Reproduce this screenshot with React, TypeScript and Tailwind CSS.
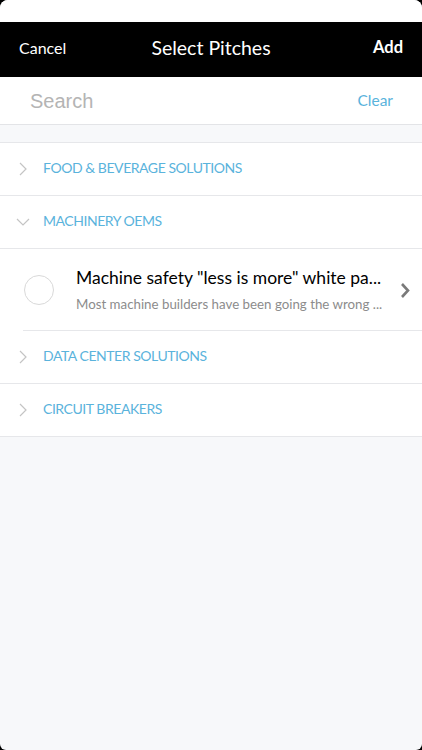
import React from "react";

const font = { fontFamily: 'Lato, "Noto Sans", sans-serif' };

function Chevron({ open }: { open?: boolean }) {
  return (
    <svg width="14" height="14" viewBox="0 0 14 14" className="shrink-0">
      {open ? (
        <path d="M1 4 L7 10 L13 4" fill="none" stroke="#c4c4c4" strokeWidth="1.2" />
      ) : (
        <path d="M4 1 L10 7 L4 13" fill="none" stroke="#c4c4c4" strokeWidth="1.2" />
      )}
    </svg>
  );
}

function Category({ label, open }: { label: string; open?: boolean }) {
  return (
    <div className="flex h-[53px] items-center border-b border-[#e6e7ea] bg-white pl-[16px]">
      <div className="flex w-[27px] items-center">
        <Chevron open={open} />
      </div>
      <span className="pb-[3px] text-[14px] tracking-[-0.45px] text-[#5ab3dc]" style={font}>
        {label}
      </span>
    </div>
  );
}

export default function App() {
  return (
    <div className="h-[750px] w-[422px] bg-black">
      <div className="flex h-full flex-col overflow-hidden rounded-t-[8px] rounded-b-[6px] bg-[#f7f8fa]">
        <div className="h-[22px] bg-white" />
        <div className="grid h-[55px] grid-cols-[1fr_auto_1fr] items-center bg-black px-[19px] pb-[4px] text-white" style={font}>
          <span className="text-[16px]">Cancel</span>
          <span className="text-[19.5px]">Select Pitches</span>
          <span className="text-right text-[16.5px] font-bold">Add</span>
        </div>
        <div className="flex h-[48px] items-center justify-between border-b border-[#e3e4e7] bg-white pl-[30px] pr-[29px]">
          <span className="text-[20px] text-[#b4b4b4]" style={{ fontFamily: '"Liberation Sans", Arial, sans-serif' }}>
            Search
          </span>
          <span className="text-[15.5px] text-[#5ab3dc]" style={font}>
            Clear
          </span>
        </div>
        <div className="h-[17px]" />
        <div className="border-t border-[#e6e7ea]">
          <Category label="FOOD & BEVERAGE SOLUTIONS" />
          <Category label="MACHINERY OEMS" open />
          <div className="bg-white">
            <div className="flex h-[81px] items-center pl-[24px]">
              <div className="h-[30px] w-[30px] shrink-0 rounded-full border border-[#d9d9d9]" />
              <div className="ml-[22px] flex min-w-0 flex-1 flex-col" style={font}>
                <span className="whitespace-nowrap text-[17.5px] leading-[24px] text-black">
                  Machine safety "less is more" white pa...
                </span>
                <span className="mt-[5px] whitespace-nowrap text-[13.3px] leading-[18px] text-[#8c8c8c]">
                  Most machine builders have been going the wrong ...
                </span>
              </div>
              <div className="flex w-[34px] shrink-0 items-center justify-center pt-[2px]">
                <svg width="12" height="17" viewBox="0 0 12 17">
                  <path d="M3 2 L9 8.5 L3 15" fill="none" stroke="#7a7a7a" strokeWidth="2.6" />
                </svg>
              </div>
            </div>
            <div className="ml-[23px] border-b border-[#e6e7ea]" />
          </div>
          <Category label="DATA CENTER SOLUTIONS" />
          <Category label="CIRCUIT BREAKERS" />
        </div>
      </div>
    </div>
  );
}
